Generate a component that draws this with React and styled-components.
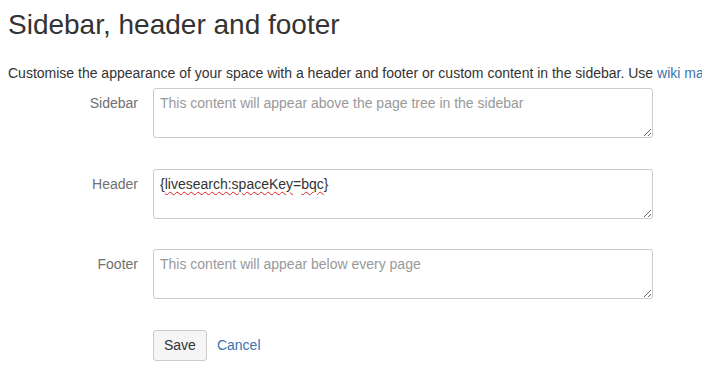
import React from "react";
import styled, { createGlobalStyle } from "styled-components";

const Global = createGlobalStyle`
  html, body { margin: 0; padding: 0; background: #fff; overflow: hidden; }
  body { font-family: "Liberation Sans", Arial, sans-serif; color: #333; }
`;

const Page = styled.div`
  padding: 0 8px;
`;

const Title = styled.h1`
  margin: 9px 0 0 0;
  font-size: 28px;
  line-height: 32px;
  font-weight: normal;
  color: #333;
`;

const Intro = styled.p`
  margin: 22px 0 5px 0;
  font-size: 14px;
  line-height: 20px;
  white-space: nowrap;
`;

const Link = styled.a`
  color: #3b73af;
  text-decoration: none;
  font-size: 14px;
`;

const Form = styled.form`
  display: grid;
  grid-template-columns: 130px 500px;
  column-gap: 15px;
  row-gap: 30.5px;
  align-items: start;
`;

const Label = styled.label`
  text-align: right;
  font-size: 14px;
  line-height: 20px;
  color: #707070;
  padding-top: 5px;
`;

const fieldStyles = `
  box-sizing: border-box;
  width: 500px;
  height: 50px;
  border: 1px solid #ccc;
  border-radius: 3px;
  padding: 4px 6px;
  font-family: "Liberation Sans", Arial, sans-serif;
  font-size: 14px;
  line-height: 20px;
  color: #333;
  background: #fff;
  resize: both;
  overflow: auto;
  margin: 0;
  display: block;
`;

const Area = styled.textarea`
  ${fieldStyles}
  &::placeholder { color: #999; opacity: 1; }
`;

const FakeArea = styled.div`
  ${fieldStyles}
`;

const Misspelled = styled.span`
  text-decoration: underline wavy #e02020;
  text-decoration-thickness: 1px;
  text-underline-offset: 2px;
`;

const Actions = styled.div`
  grid-column: 2;
  display: flex;
  align-items: center;
  gap: 10px;
  font-size: 14px;
  line-height: 20px;
`;

const Button = styled.button`
  box-sizing: border-box;
  height: 31px;
  padding: 4px 10px;
  border: 1px solid #ccc;
  border-radius: 3px;
  background: #f5f5f5;
  font-family: "Liberation Sans", Arial, sans-serif;
  font-size: 14px;
  line-height: 20px;
  color: #333;
`;

export default function App() {
  return (
    <Page>
      <Global />
      <Title>Sidebar, header and footer</Title>
      <Intro>
        Customise the appearance of your space with a header and footer or custom content in the sidebar. Use{" "}
        <Link href="#">wiki markup</Link> to add content.
      </Intro>
      <Form onSubmit={(e) => e.preventDefault()}>
        <Label>Sidebar</Label>
        <Area placeholder="This content will appear above the page tree in the sidebar" />
        <Label>Header</Label>
        <FakeArea role="textbox">
          {"{"}
          <Misspelled>livesearch:spaceKey</Misspelled>=<Misspelled>bqc</Misspelled>
          {"}"}
        </FakeArea>
        <Label>Footer</Label>
        <Area placeholder="This content will appear below every page" />
        <Actions>
          <Button type="submit">Save</Button>
          <Link href="#">Cancel</Link>
        </Actions>
      </Form>
    </Page>
  );
}
